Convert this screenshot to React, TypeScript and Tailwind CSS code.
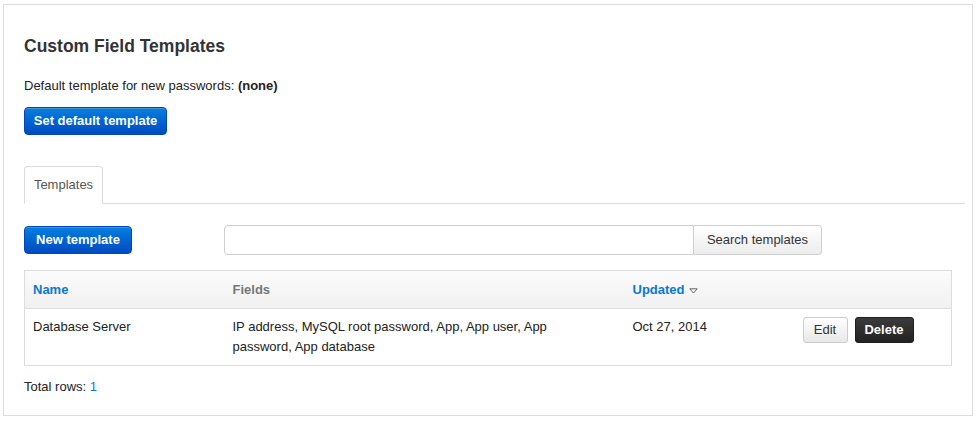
import React from 'react';

const font = { fontFamily: '"Liberation Sans", Arial, Helvetica, sans-serif' };

const BlueButton: React.FC<{ children: React.ReactNode; className?: string }> = ({ children, className }) => (
  <button
    className={`block h-[28px] px-[8px] whitespace-nowrap rounded-[4px] border border-[#0046b8] bg-gradient-to-b from-[#0a7fdf] to-[#0049c2] text-white font-bold text-[13px] shadow-[inset_0_1px_0_rgba(255,255,255,0.2)] ${className ?? ''}`}
  >
    {children}
  </button>
);

export default function App() {
  return (
    <div className="w-[978px] h-[423px] bg-white text-[13px] text-[#222] overflow-hidden pt-[4px] pl-[3px]" style={font}>
      <div className="w-[970px] h-[412px] border border-[#dcdcdc] pl-[20px] pr-[6px]">
        <h2 className="text-[17.5px] font-bold text-[#333] mt-[31px] leading-[20px]">Custom Field Templates</h2>
        <p className="mt-[21px] leading-[18px]">
          Default template for new passwords: <span className="font-bold">(none)</span>
        </p>
        <BlueButton className="mt-[12px] w-[143px]">Set default template</BlueButton>

        <div className="mt-[31px] flex border-b border-[#dcdcdc] mr-[1px]">
          <div className="w-[79px] h-[38px] -mb-px border border-[#dcdcdc] border-b-white bg-white rounded-t-[4px] flex items-center justify-center text-[#555]">
            Templates
          </div>
        </div>

        <div className="mt-[21px] flex items-center">
          <BlueButton className="w-[108px]">New template</BlueButton>
          <div className="ml-[92px] flex h-[30px]">
            <input className="w-[470px] h-full border border-[#cfcfcf] rounded-l-[4px] outline-none px-2" />
            <button className="w-[128px] h-full border border-l-0 border-[#cfcfcf] rounded-r-[4px] bg-gradient-to-b from-white to-[#ececec] text-[#333]">
              Search templates
            </button>
          </div>
        </div>

        <table className="mt-[15px] w-[928px] border border-[#dcdcdc] border-collapse table-fixed">
          <colgroup>
            <col className="w-[200px]" />
            <col className="w-[400px]" />
            <col className="w-[170px]" />
            <col />
          </colgroup>
          <thead>
            <tr className="h-[38px] bg-gradient-to-b from-[#fbfbfb] to-[#f1f1f1] border-b border-[#dcdcdc]">
              <th className="text-left pl-[8px] pr-[9px] font-bold text-[#0a79cc]">Name</th>
              <th className="text-left pl-[8px] pr-[9px] font-bold text-[#777]">Fields</th>
              <th className="text-left pl-[8px] pr-[9px] font-bold text-[#0a79cc]">
                <span className="inline-flex items-center">
                  Updated
                  <svg width="9" height="6" viewBox="0 0 9 6" className="ml-[4px] mt-[3px]">
                    <path d="M0.8 0.8 H8.2 L4.5 5 Z" fill="none" stroke="#555" strokeWidth="0.9" />
                  </svg>
                </span>
              </th>
              <th />
            </tr>
          </thead>
          <tbody>
            <tr className="align-top">
              <td className="pl-[8px] pr-[9px] pt-[8px] pb-[8px] leading-[20px]">Database Server</td>
              <td className="pl-[8px] pr-[40px] pt-[8px] pb-[8px] leading-[20px]">
                IP address, MySQL root password, App, App user, App password, App database
              </td>
              <td className="pl-[8px] pr-[9px] pt-[8px] pb-[8px] leading-[20px]">Oct 27, 2014</td>
              <td className="pl-[8px] pt-[8px]">
                <div className="flex gap-[7px]">
                  <button className="h-[26px] w-[45px] border border-[#cccccc] rounded-[3px] bg-gradient-to-b from-white to-[#e8e8e8] text-[#333]">
                    Edit
                  </button>
                  <button className="h-[26px] w-[59px] border border-[#1e1e1e] rounded-[3px] bg-gradient-to-b from-[#3c3c3c] to-[#222] text-white font-bold">
                    Delete
                  </button>
                </div>
              </td>
            </tr>
          </tbody>
        </table>

        <p className="mt-[12px] leading-[18px]">
          Total rows: <span className="text-[#0a79cc]">1</span>
        </p>
      </div>
    </div>
  );
}
